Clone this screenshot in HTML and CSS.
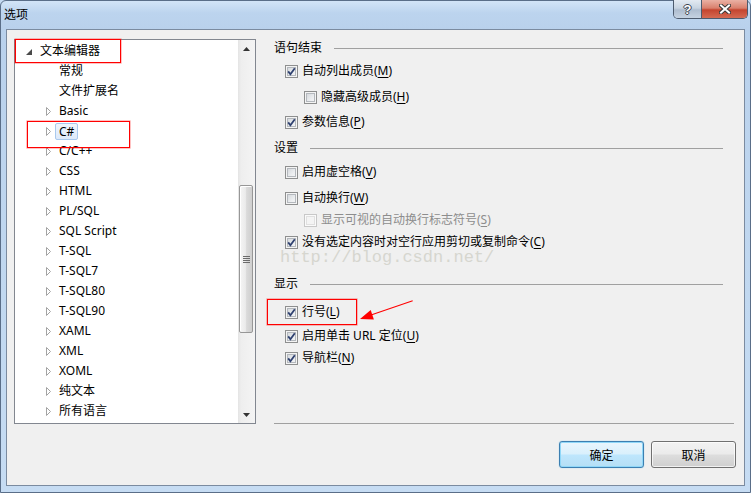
FILE: index.html
```html
<!DOCTYPE html>
<html>
<head>
<meta charset="utf-8">
<title>选项</title>
<link rel="stylesheet" href="styles.css">
</head>
<body>
<div class="window">
  <div class="titlebar">
    <span class="title">选项</span>
    <div class="caption-btns">
      <div class="cap-btn help">?</div>
      <div class="cap-btn close">
        <svg width="12" height="10" viewBox="0 0 12 10"><path d="M2 1.5 L10 8.5 M10 1.5 L2 8.5" stroke="#3a3a3a" stroke-width="4" stroke-linecap="square" fill="none"/><path d="M2 1.5 L10 8.5 M10 1.5 L2 8.5" stroke="#ffffff" stroke-width="2" stroke-linecap="square" fill="none"/></svg>
      </div>
    </div>
  </div>
  <div class="client">
    <div class="main">
      <div class="tree">
        <div class="tree-list">
          <div class="node lv0"><span class="exp"><svg width="6" height="6" viewBox="0 0 6 6"><polygon points="6,0 6,6 0,6" fill="#4a4a4a"/></svg></span><span>文本编辑器</span></div>
          <div class="node lv1"><span class="exp"></span><span>常规</span></div>
          <div class="node lv1"><span class="exp"></span><span>文件扩展名</span></div>
          <div class="node lv1"><span class="exp"><svg class="tri" width="6" height="9" viewBox="0 0 6 9"><polygon points="0.5,0.5 4.5,4.5 0.5,8.5" fill="#fff" stroke="#a3a3a3"/></svg></span><span>Basic</span></div>
          <div class="node lv1"><span class="exp"><svg class="tri" width="6" height="9" viewBox="0 0 6 9"><polygon points="0.5,0.5 4.5,4.5 0.5,8.5" fill="#fff" stroke="#a3a3a3"/></svg></span><span class="sel">C#</span></div>
          <div class="node lv1"><span class="exp"><svg class="tri" width="6" height="9" viewBox="0 0 6 9"><polygon points="0.5,0.5 4.5,4.5 0.5,8.5" fill="#fff" stroke="#a3a3a3"/></svg></span><span>C/C++</span></div>
          <div class="node lv1"><span class="exp"><svg class="tri" width="6" height="9" viewBox="0 0 6 9"><polygon points="0.5,0.5 4.5,4.5 0.5,8.5" fill="#fff" stroke="#a3a3a3"/></svg></span><span>CSS</span></div>
          <div class="node lv1"><span class="exp"><svg class="tri" width="6" height="9" viewBox="0 0 6 9"><polygon points="0.5,0.5 4.5,4.5 0.5,8.5" fill="#fff" stroke="#a3a3a3"/></svg></span><span>HTML</span></div>
          <div class="node lv1"><span class="exp"><svg class="tri" width="6" height="9" viewBox="0 0 6 9"><polygon points="0.5,0.5 4.5,4.5 0.5,8.5" fill="#fff" stroke="#a3a3a3"/></svg></span><span>PL/SQL</span></div>
          <div class="node lv1"><span class="exp"><svg class="tri" width="6" height="9" viewBox="0 0 6 9"><polygon points="0.5,0.5 4.5,4.5 0.5,8.5" fill="#fff" stroke="#a3a3a3"/></svg></span><span>SQL Script</span></div>
          <div class="node lv1"><span class="exp"><svg class="tri" width="6" height="9" viewBox="0 0 6 9"><polygon points="0.5,0.5 4.5,4.5 0.5,8.5" fill="#fff" stroke="#a3a3a3"/></svg></span><span>T-SQL</span></div>
          <div class="node lv1"><span class="exp"><svg class="tri" width="6" height="9" viewBox="0 0 6 9"><polygon points="0.5,0.5 4.5,4.5 0.5,8.5" fill="#fff" stroke="#a3a3a3"/></svg></span><span>T-SQL7</span></div>
          <div class="node lv1"><span class="exp"><svg class="tri" width="6" height="9" viewBox="0 0 6 9"><polygon points="0.5,0.5 4.5,4.5 0.5,8.5" fill="#fff" stroke="#a3a3a3"/></svg></span><span>T-SQL80</span></div>
          <div class="node lv1"><span class="exp"><svg class="tri" width="6" height="9" viewBox="0 0 6 9"><polygon points="0.5,0.5 4.5,4.5 0.5,8.5" fill="#fff" stroke="#a3a3a3"/></svg></span><span>T-SQL90</span></div>
          <div class="node lv1"><span class="exp"><svg class="tri" width="6" height="9" viewBox="0 0 6 9"><polygon points="0.5,0.5 4.5,4.5 0.5,8.5" fill="#fff" stroke="#a3a3a3"/></svg></span><span>XAML</span></div>
          <div class="node lv1"><span class="exp"><svg class="tri" width="6" height="9" viewBox="0 0 6 9"><polygon points="0.5,0.5 4.5,4.5 0.5,8.5" fill="#fff" stroke="#a3a3a3"/></svg></span><span>XML</span></div>
          <div class="node lv1"><span class="exp"><svg class="tri" width="6" height="9" viewBox="0 0 6 9"><polygon points="0.5,0.5 4.5,4.5 0.5,8.5" fill="#fff" stroke="#a3a3a3"/></svg></span><span>XOML</span></div>
          <div class="node lv1"><span class="exp"><svg class="tri" width="6" height="9" viewBox="0 0 6 9"><polygon points="0.5,0.5 4.5,4.5 0.5,8.5" fill="#fff" stroke="#a3a3a3"/></svg></span><span>纯文本</span></div>
          <div class="node lv1"><span class="exp"><svg class="tri" width="6" height="9" viewBox="0 0 6 9"><polygon points="0.5,0.5 4.5,4.5 0.5,8.5" fill="#fff" stroke="#a3a3a3"/></svg></span><span>所有语言</span></div>
        </div>
        <div class="sb">
          <div class="sb-btn"><svg width="7" height="4" viewBox="0 0 7 4"><polygon points="3.5,0 7,4 0,4" fill="#333"/></svg></div>
          <div class="sb-track">
            <div class="thumb"><span class="grip"></span></div>
          </div>
          <div class="sb-btn"><svg width="7" height="4" viewBox="0 0 7 4"><polygon points="0,0 7,0 3.5,4" fill="#333"/></svg></div>
        </div>
      </div>
      <div class="panel">
        <div class="opts">
          <div class="hdr"><span>语句结束</span><i class="rule"></i></div>
          <div class="opt m5"><span class="cb"><svg viewBox="0 0 13 13"><path d="M3.2 6.4 L5.4 9.2 L9.8 3.2" stroke="#2f4170" stroke-width="1.8" fill="none"/></svg></span><span class="lbl">自动列出成员(<u>M</u>)</span></div>
          <div class="opt lv2 m6"><span class="cb"></span><span class="lbl">隐藏高级成员(<u>H</u>)</span></div>
          <div class="opt m5"><span class="cb"><svg viewBox="0 0 13 13"><path d="M3.2 6.4 L5.4 9.2 L9.8 3.2" stroke="#2f4170" stroke-width="1.8" fill="none"/></svg></span><span class="lbl">参数信息(<u>P</u>)</span></div>
          <div class="hdr m8"><span>设置</span><i class="rule"></i></div>
          <div class="opt m6"><span class="cb"></span><span class="lbl">启用虚空格(<u>V</u>)</span></div>
          <div class="opt m6"><span class="cb"></span><span class="lbl">自动换行(<u>W</u>)</span></div>
          <div class="opt lv2 m2 disabled"><span class="cb"></span><span class="lbl">显示可视的自动换行标志符号(<u>S</u>)</span></div>
          <div class="opt m2"><span class="cb"><svg viewBox="0 0 13 13"><path d="M3.2 6.4 L5.4 9.2 L9.8 3.2" stroke="#2f4170" stroke-width="1.8" fill="none"/></svg></span><span class="lbl">没有选定内容时对空行应用剪切或复制命令(<u>C</u>)</span></div>
          <div class="hdr m24"><span>显示</span><i class="rule"></i></div>
          <div class="opt m10"><span class="cb"><svg viewBox="0 0 13 13"><path d="M3.2 6.4 L5.4 9.2 L9.8 3.2" stroke="#2f4170" stroke-width="1.8" fill="none"/></svg></span><span class="lbl">行号(<u>L</u>)</span></div>
          <div class="opt m4"><span class="cb"><svg viewBox="0 0 13 13"><path d="M3.2 6.4 L5.4 9.2 L9.8 3.2" stroke="#2f4170" stroke-width="1.8" fill="none"/></svg></span><span class="lbl">启用单击 URL 定位(<u>U</u>)</span></div>
          <div class="opt m2"><span class="cb"><svg viewBox="0 0 13 13"><path d="M3.2 6.4 L5.4 9.2 L9.8 3.2" stroke="#2f4170" stroke-width="1.8" fill="none"/></svg></span><span class="lbl">导航栏(<u>N</u>)</span></div>
        </div>
        <div class="sep"></div>
      </div>
    </div>
    <div class="footer">
      <button class="btn default">确定</button>
      <button class="btn">取消</button>
    </div>
  </div>
</div>
<div class="watermark">http://blog.csdn.net/</div>
<div class="note note-a"></div>
<div class="note note-b"></div>
<div class="note note-c"></div>
<svg class="arrow" width="62" height="30" viewBox="0 0 62 30">
  <line x1="57.7" y1="5.7" x2="16" y2="20" stroke="#f00" stroke-width="1.1"/>
  <polygon points="5,24 18.9,24.5 15.7,15.1" fill="#f00"/>
</svg>
</body>
</html>
```
FILE: styles.css
```css
* { box-sizing: border-box; }
html, body { margin: 0; padding: 0; }
body {
  width: 751px;
  height: 493px;
  overflow: hidden;
  position: relative;
  font-family: "Noto Sans", "Noto Sans CJK SC", sans-serif;
  font-size: 12px;
  color: #000;
  background: #c4daf2;
}
.window {
  width: 751px;
  height: 493px;
  border: 1px solid #5a6e88;
  border-radius: 6px 6px 0 0;
  background: linear-gradient(180deg, #d2e4f7 0, #bcd4ee 12px, #b9d1ec 28px, #c1d8f0 60%, #c6dcf3 100%);
  display: flex;
  flex-direction: column;
  padding: 0 5px 6px 5px;
}
.titlebar {
  height: 28px;
  flex: none;
  display: flex;
  align-items: flex-start;
  margin-right: -3px;
}
.title {
  margin: 7px 0 0 -2px;
  line-height: 14px;
  font-size: 12px;
  color: #000;
}
.caption-btns {
  margin-left: auto;
  margin-top: -1px;
  display: flex;
  height: 19px;
  border: 1px solid #4d5b6e;
  border-top: none;
  border-radius: 0 0 5px 5px;
  overflow: hidden;
}
.cap-btn {
  height: 18px;
  display: flex;
  align-items: center;
  justify-content: center;
}
.help {
  width: 28px;
  border-right: 1px solid #4d5b6e;
  background: linear-gradient(180deg, #e3eaf2 0, #c8d4e1 45%, #aebdcf 55%, #c5d2e1 100%);
  color: #fff;
  font-weight: bold;
  font-size: 13px;
  font-family: "Liberation Sans", sans-serif;
  text-shadow: 1px 0 #3b4450, -1px 0 #3b4450, 0 1px #3b4450, 0 -1px #3b4450;
}
.close {
  width: 45px;
  background: linear-gradient(180deg, #eab1a4 0, #d9806d 45%, #c4452f 55%, #d56a52 100%);
}
.client {
  flex: 1;
  border: 1px solid #7b8ba0;
  background: #f0f0f0;
  padding: 9px 10px 0 7px;
  display: flex;
  flex-direction: column;
}
.main {
  display: flex;
  height: 385px;
  flex: none;
}
.tree {
  width: 242px;
  height: 385px;
  border: 1px solid #828790;
  background: #fff;
  display: flex;
  flex: none;
}
.tree-list {
  flex: 1;
  padding-top: 1px;
}
.node {
  height: 20px;
  line-height: 20px;
  display: flex;
  align-items: center;
  white-space: nowrap;
}
.exp {
  width: 17px;
  height: 20px;
  flex: none;
  display: flex;
  align-items: center;
}
.lv0 { padding-left: 8px; }
.lv0 .exp svg { margin-left: 3px; margin-top: 1px; }
.lv1 { padding-left: 27px; }
.lv1 .exp svg { margin-left: 4px; }
.sel {
  margin-left: -4px;
  padding: 0 3px;
  height: 17px;
  line-height: 15px;
  border: 1px solid #a9c9ee;
  border-radius: 2px;
  background: linear-gradient(180deg, #f0f6fd, #dde9f9);
}
.sb {
  width: 17px;
  flex: none;
  display: flex;
  flex-direction: column;
  background: linear-gradient(90deg, #e4e4e4 0, #eeeeee 3px, #f4f4f4 100%);
}
.sb-btn {
  height: 17px;
  flex: none;
  display: flex;
  align-items: center;
  justify-content: center;
}
.sb-track {
  flex: 1;
  padding-top: 128px;
}
.thumb {
  margin-left: 1px;
  width: 14px;
  height: 148px;
  border: 1px solid #979797;
  border-radius: 2px;
  background: linear-gradient(90deg, #f5f5f5 0, #ebebeb 45%, #dadada 55%, #cfcfcf 100%);
  box-shadow: inset 1px 1px 0 #fff;
  display: flex;
  align-items: center;
  justify-content: center;
}
.grip {
  width: 7px;
  height: 7px;
  background: repeating-linear-gradient(180deg, #6b6b6b 0, #6b6b6b 1px, transparent 1px, transparent 2px);
}
.panel {
  flex: 1;
  margin-left: 11px;
  padding-left: 7px;
  display: flex;
  flex-direction: column;
}
.opts { flex: 1; padding-top: 1px; }
.sep {
  height: 1px;
  background: #a0a0a0;
  flex: none;
}
.hdr {
  display: flex;
  align-items: center;
  height: 16px;
  line-height: 16px;
}
.rule {
  flex: 1;
  height: 1px;
  background: #a0a0a0;
  margin: 0 11px 0 12px;
}
.opt {
  display: flex;
  align-items: center;
  height: 20px;
  white-space: nowrap;
}
.lbl { line-height: 14px; }
.opt u { text-underline-offset: 2px; }
.cb {
  position: relative;
  width: 13px;
  height: 13px;
  flex: none;
  margin: 0 4px 0 11px;
  border: 1px solid #8e8f8f;
  background: linear-gradient(135deg, #cdd1d6 0, #eceef0 60%, #f8f8f8 100%);
  box-shadow: inset 0 0 0 1px #f4f4f4, inset 0 0 0 2px #b4b8bd;
}
.cb svg {
  position: absolute;
  left: -1px;
  top: -1px;
  width: 13px;
  height: 13px;
}
.lv2 .cb { margin-left: 30px; }
.disabled { color: #8d8d8d; }
.disabled .cb {
  border-color: #c8c8c8;
  background: #f4f4f4;
  box-shadow: inset 0 0 0 1px #fafafa, inset 0 0 0 2px #e0e0e0;
}
.m2 { margin-top: 2px; }
.m4 { margin-top: 4px; }
.m5 { margin-top: 5px; }
.m6 { margin-top: 6px; }
.m8 { margin-top: 8px; }
.m10 { margin-top: 10px; }
.m24 { margin-top: 24px; }
.footer {
  display: flex;
  justify-content: flex-end;
  gap: 7px;
  margin-top: 17px;
  margin-right: -2px;
}
.btn {
  width: 85px;
  height: 27px;
  font-family: "Noto Sans", "Noto Sans CJK SC", sans-serif;
  font-size: 12px;
  color: #000;
  border: 1px solid #707070;
  border-radius: 3px;
  background: linear-gradient(180deg, #f2f2f2 0, #ebebeb 48%, #dddddd 52%, #cfcfcf 100%);
  box-shadow: inset 0 0 0 1px rgba(255, 255, 255, 0.7);
  padding: 0;
}
.btn.default {
  border-color: #3c7fb1;
  background: linear-gradient(180deg, #eaf6fd 0, #d9f0fc 48%, #bee6fd 52%, #b5dff5 100%);
  box-shadow: inset 0 0 0 1px #8fd7f8, 0 0 1px #5ec1f0;
}
.watermark {
  position: absolute;
  left: 280px;
  top: 250px;
  font-family: "Liberation Mono", monospace;
  font-size: 17px;
  line-height: 16px;
  color: #d6d6cf;
  pointer-events: none;
}
.note {
  position: absolute;
  border: 1px solid #ff0000;
  box-shadow: 0 0 0 0.6px rgba(255, 0, 0, 0.4);
}
.note-a { left: 15px; top: 39px; width: 106px; height: 24px; }
.note-b { left: 27px; top: 121px; width: 103px; height: 27px; }
.note-c { left: 267px; top: 299px; width: 90px; height: 26px; }
.arrow {
  position: absolute;
  left: 355px;
  top: 295px;
}
```
